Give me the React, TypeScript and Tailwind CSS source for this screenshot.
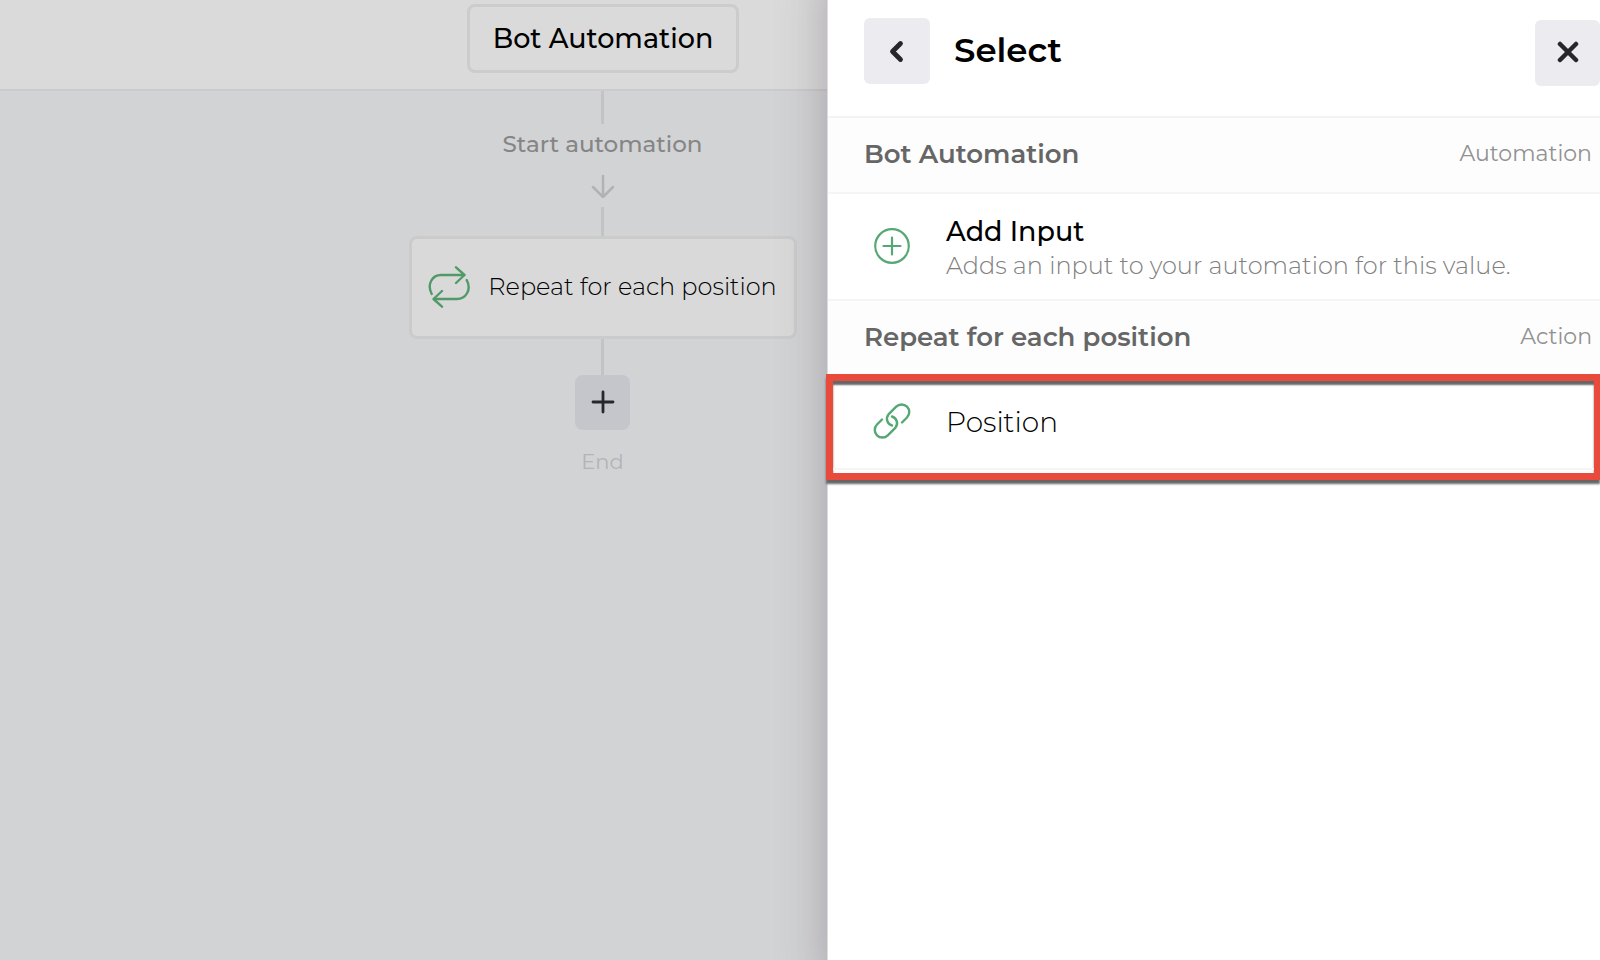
import type { ReactNode } from "react";

function RepeatIcon() {
  return (
    <svg
      aria-hidden="true"
      className="h-[42px] w-[42px] shrink-0"
      viewBox="0 0 42 42"
      fill="none"
      stroke="#519a68"
      strokeWidth="2.4"
      strokeLinecap="round"
      strokeLinejoin="round"
    >
      <path d="M3.700 28C-1.500 18 4.500 9 13 9H36" />
      <path d="M28 1.300L36.500 9L28 17" />
      <path d="M38.700 14C44 24 37.500 33 29 33H6" />
      <path d="M14 25L5.500 33L14 40.700" />
    </svg>
  );
}

function LinkIcon() {
  return (
    <svg
      aria-hidden="true"
      className="h-[38px] w-[38px]"
      viewBox="0 0 38 38"
      fill="none"
      stroke="#55a873"
      strokeWidth="2.4"
      strokeLinecap="round"
    >
      <path d="M29 20.500L34 15.500A7.600 7.600 0 0 0 23.200 4.700L15.500 12.400A7 7 0 0 0 19 23.500" />
      <path d="M9 17.500L4 22.500A7.600 7.600 0 0 0 14.800 33.300L22.500 25.600A7 7 0 0 0 19 14.500" />
    </svg>
  );
}

function AddIcon() {
  return (
    <svg
      aria-hidden="true"
      className="h-[38px] w-[38px]"
      viewBox="0 0 38 38"
      fill="none"
      stroke="#55a873"
      strokeWidth="2.2"
      strokeLinecap="round"
    >
      <circle cx="19" cy="19" r="16.800" />
      <path d="M19 10.500V27.500M10.500 19H27.500" />
    </svg>
  );
}

function SectionHeader({ title, kind }: { title: string; kind: string }) {
  return (
    <div className="flex h-[74px] items-center justify-between bg-[#fdfdfd] pr-2 pb-[2px] pl-9">
      <h3 className="text-[26px] leading-8 font-semibold text-[#666]">{title}</h3>
      <span className="text-[22px] leading-8 text-[#919191]">{kind}</span>
    </div>
  );
}

function OptionRow({
  icon,
  title,
  description,
}: {
  icon: ReactNode;
  title: string;
  description?: string;
}) {
  return (
    <button type="button" className="flex w-full items-center gap-[35px] pl-[45px] text-left">
      {icon}
      <span className="flex flex-col pt-[3px]">
        <span
          className={
            description
              ? "text-[27px] leading-9 font-medium text-black"
              : "text-[28px] leading-9 font-light text-black"
          }
        >
          {title}
        </span>
        {description && (
          <span className="text-[24px] leading-8 font-light text-[#808080]">{description}</span>
        )}
      </span>
    </button>
  );
}

function Canvas() {
  return (
    <main className="flex min-w-0 flex-1 flex-col bg-[#d2d3d5]">
      <header className="flex h-[91px] justify-center border-b-2 border-[#cbcbcb] bg-[#dadada] pt-1 pl-[379px]">
        <button
          type="button"
          className="h-[69px] w-[272px] rounded-lg border-[3px] border-[#cccccc] text-[27px] leading-9 font-medium whitespace-nowrap text-black"
        >
          Bot Automation
        </button>
      </header>
      <div className="flex flex-col items-center pl-[378px]">
        <div className="h-[33px] w-[3px] bg-[#c4c2c5]" />
        <p className="mt-1 text-[23px] leading-8 font-medium text-[#858586]">Start automation</p>
        <svg
          aria-hidden="true"
          className="mt-[14px] h-6 w-6"
          viewBox="0 0 24 24"
          fill="none"
          stroke="#b1b2b4"
          strokeWidth="2.500"
          strokeLinecap="round"
          strokeLinejoin="round"
        >
          <path d="M12 2V23M2 13L12 23L22 13" />
        </svg>
        <div className="mt-[9px] h-[29px] w-[3px] bg-[#c4c2c5]" />
        <button
          type="button"
          className="flex h-[103px] w-[388px] items-center justify-center gap-[18px] rounded-lg border-[3px] border-[#cbcbcc] bg-[#d9d9d9] pb-px text-[24px] leading-8 font-light whitespace-nowrap text-black"
        >
          <RepeatIcon />
          Repeat for each position
        </button>
        <div className="h-9 w-[3px] bg-[#c4c2c5]" />
        <button
          type="button"
          aria-label="Add action"
          className="flex h-[55px] w-[55px] items-center justify-center rounded-lg bg-[#c5c6cc] pb-[2px]"
        >
          <svg
            aria-hidden="true"
            className="h-6 w-6"
            viewBox="0 0 24 24"
            fill="none"
            stroke="#27282d"
            strokeWidth="2.800"
            strokeLinecap="round"
          >
            <path d="M12 2V22M2 12H22" />
          </svg>
        </button>
        <p className="mt-4 text-[21px] leading-8 text-[#b3b4b5]">End</p>
      </div>
    </main>
  );
}

function SelectPanel() {
  return (
    <aside className="relative w-[773px] max-w-full shrink-0 border-l border-[#dcdcde] bg-white shadow-[24px_0_44px_24px_rgba(80,70,80,0.36)]">
      <header className="flex h-[118px] items-start gap-6 border-b-2 border-[#f3f3f4] pt-[18px] pl-9">
        <button
          type="button"
          aria-label="Back"
          className="flex h-[66px] w-[66px] items-center justify-center rounded-md bg-[#ebebf0]"
        >
          <svg
            aria-hidden="true"
            className="h-6 w-6"
            viewBox="0 0 24 24"
            fill="none"
            stroke="#25272b"
            strokeWidth="4.800"
            strokeLinecap="round"
            strokeLinejoin="round"
          >
            <path d="M15.500 4.500L7.500 12.500L15.500 20.500" />
          </svg>
        </button>
        <h2 className="flex-1 text-[34px] leading-[64px] font-semibold text-black">Select</h2>
        <button
          type="button"
          aria-label="Close"
          className="mt-[2px] flex h-[66px] w-[65px] items-center justify-center rounded-md bg-[#ebebf0]"
        >
          <svg
            aria-hidden="true"
            className="h-6 w-6"
            viewBox="0 0 24 24"
            fill="none"
            stroke="#25272b"
            strokeWidth="4.500"
            strokeLinecap="round"
          >
            <path d="M4 3L20 19M20 3L4 19" />
          </svg>
        </button>
      </header>
      <SectionHeader title="Bot Automation" kind="Automation" />
      <div className="flex h-[109px] items-center border-y-2 border-[#f5f5f6] pb-px">
        <OptionRow
          icon={<AddIcon />}
          title="Add Input"
          description="Adds an input to your automation for this value."
        />
      </div>
      <SectionHeader title="Repeat for each position" kind="Action" />
      {/* Highlighted option */}
      <div className="relative -mt-px -ml-[2px] border-[7px] border-r-[6px] border-[#e84b3b] shadow-[0_4px_2px_#666,inset_0_4px_2px_#666]">
        <div className="mb-[3px] border-b-2 border-[#f5f5f6]">
          <div className="-ml-[5px] flex h-[87px] items-center pb-2">
            <OptionRow icon={<LinkIcon />} title="Position" />
          </div>
        </div>
      </div>
    </aside>
  );
}

export default function App() {
  return (
    <div className="flex min-h-screen overflow-hidden font-[Montserrat,Inter,sans-serif]">
      <Canvas />
      <SelectPanel />
    </div>
  );
}
